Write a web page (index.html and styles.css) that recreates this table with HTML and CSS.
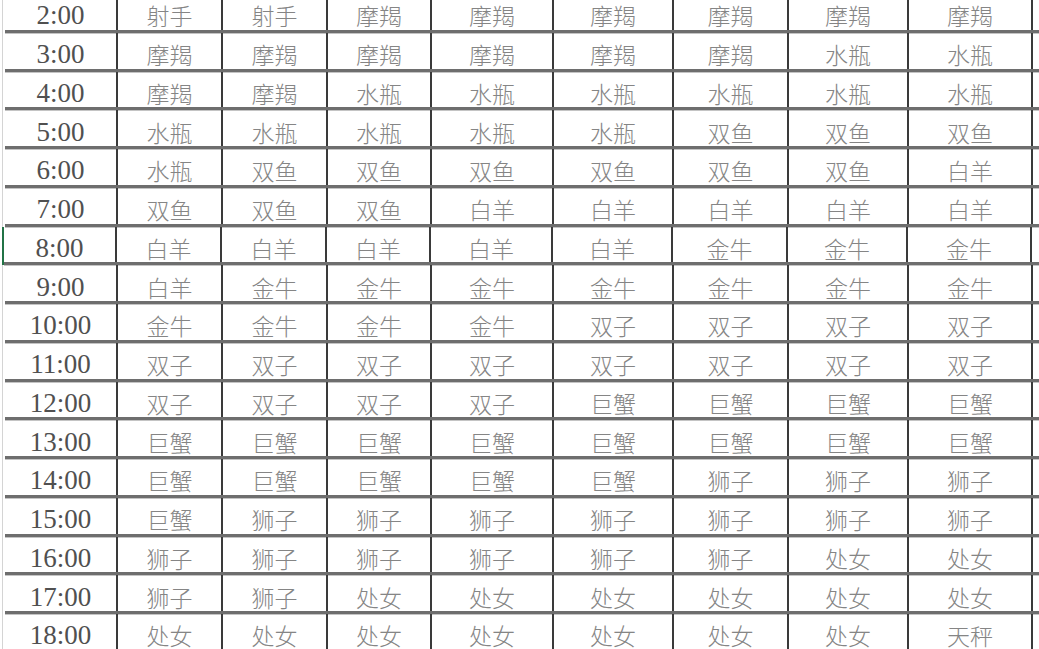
FILE: index.html
```html
<!DOCTYPE html>
<html lang="zh-CN">
<head>
<meta charset="utf-8">
<title>星座时间表</title>
<link rel="stylesheet" href="styles.css">
</head>
<body>
<div class="sheet">
  <div class="row"><div class="gut"></div><div class="cells"><div class="c t">2:00</div><div class="c">射手</div><div class="c">射手</div><div class="c">摩羯</div><div class="c">摩羯</div><div class="c">摩羯</div><div class="c">摩羯</div><div class="c">摩羯</div><div class="c">摩羯</div><div class="f"></div></div></div>
  <div class="row"><div class="gut"></div><div class="cells"><div class="c t">3:00</div><div class="c">摩羯</div><div class="c">摩羯</div><div class="c">摩羯</div><div class="c">摩羯</div><div class="c">摩羯</div><div class="c">摩羯</div><div class="c">水瓶</div><div class="c">水瓶</div><div class="f"></div></div></div>
  <div class="row"><div class="gut"></div><div class="cells"><div class="c t">4:00</div><div class="c">摩羯</div><div class="c">摩羯</div><div class="c">水瓶</div><div class="c">水瓶</div><div class="c">水瓶</div><div class="c">水瓶</div><div class="c">水瓶</div><div class="c">水瓶</div><div class="f"></div></div></div>
  <div class="row"><div class="gut"></div><div class="cells"><div class="c t">5:00</div><div class="c">水瓶</div><div class="c">水瓶</div><div class="c">水瓶</div><div class="c">水瓶</div><div class="c">水瓶</div><div class="c">双鱼</div><div class="c">双鱼</div><div class="c">双鱼</div><div class="f"></div></div></div>
  <div class="row"><div class="gut"></div><div class="cells"><div class="c t">6:00</div><div class="c">水瓶</div><div class="c">双鱼</div><div class="c">双鱼</div><div class="c">双鱼</div><div class="c">双鱼</div><div class="c">双鱼</div><div class="c">双鱼</div><div class="c">白羊</div><div class="f"></div></div></div>
  <div class="row"><div class="gut"></div><div class="cells"><div class="c t">7:00</div><div class="c">双鱼</div><div class="c">双鱼</div><div class="c">双鱼</div><div class="c">白羊</div><div class="c">白羊</div><div class="c">白羊</div><div class="c">白羊</div><div class="c">白羊</div><div class="f"></div></div></div>
  <div class="row"><div class="gut sel"></div><div class="cells"><div class="c t">8:00</div><div class="c">白羊</div><div class="c">白羊</div><div class="c">白羊</div><div class="c">白羊</div><div class="c">白羊</div><div class="c">金牛</div><div class="c">金牛</div><div class="c">金牛</div><div class="f"></div></div></div>
  <div class="row"><div class="gut"></div><div class="cells"><div class="c t">9:00</div><div class="c">白羊</div><div class="c">金牛</div><div class="c">金牛</div><div class="c">金牛</div><div class="c">金牛</div><div class="c">金牛</div><div class="c">金牛</div><div class="c">金牛</div><div class="f"></div></div></div>
  <div class="row"><div class="gut"></div><div class="cells"><div class="c t">10:00</div><div class="c">金牛</div><div class="c">金牛</div><div class="c">金牛</div><div class="c">金牛</div><div class="c">双子</div><div class="c">双子</div><div class="c">双子</div><div class="c">双子</div><div class="f"></div></div></div>
  <div class="row"><div class="gut"></div><div class="cells"><div class="c t">11:00</div><div class="c">双子</div><div class="c">双子</div><div class="c">双子</div><div class="c">双子</div><div class="c">双子</div><div class="c">双子</div><div class="c">双子</div><div class="c">双子</div><div class="f"></div></div></div>
  <div class="row"><div class="gut"></div><div class="cells"><div class="c t">12:00</div><div class="c">双子</div><div class="c">双子</div><div class="c">双子</div><div class="c">双子</div><div class="c">巨蟹</div><div class="c">巨蟹</div><div class="c">巨蟹</div><div class="c">巨蟹</div><div class="f"></div></div></div>
  <div class="row"><div class="gut"></div><div class="cells"><div class="c t">13:00</div><div class="c">巨蟹</div><div class="c">巨蟹</div><div class="c">巨蟹</div><div class="c">巨蟹</div><div class="c">巨蟹</div><div class="c">巨蟹</div><div class="c">巨蟹</div><div class="c">巨蟹</div><div class="f"></div></div></div>
  <div class="row"><div class="gut"></div><div class="cells"><div class="c t">14:00</div><div class="c">巨蟹</div><div class="c">巨蟹</div><div class="c">巨蟹</div><div class="c">巨蟹</div><div class="c">巨蟹</div><div class="c">狮子</div><div class="c">狮子</div><div class="c">狮子</div><div class="f"></div></div></div>
  <div class="row"><div class="gut"></div><div class="cells"><div class="c t">15:00</div><div class="c">巨蟹</div><div class="c">狮子</div><div class="c">狮子</div><div class="c">狮子</div><div class="c">狮子</div><div class="c">狮子</div><div class="c">狮子</div><div class="c">狮子</div><div class="f"></div></div></div>
  <div class="row"><div class="gut"></div><div class="cells"><div class="c t">16:00</div><div class="c">狮子</div><div class="c">狮子</div><div class="c">狮子</div><div class="c">狮子</div><div class="c">狮子</div><div class="c">狮子</div><div class="c">处女</div><div class="c">处女</div><div class="f"></div></div></div>
  <div class="row"><div class="gut"></div><div class="cells"><div class="c t">17:00</div><div class="c">狮子</div><div class="c">狮子</div><div class="c">处女</div><div class="c">处女</div><div class="c">处女</div><div class="c">处女</div><div class="c">处女</div><div class="c">处女</div><div class="f"></div></div></div>
  <div class="row"><div class="gut"></div><div class="cells"><div class="c t">18:00</div><div class="c">处女</div><div class="c">处女</div><div class="c">处女</div><div class="c">处女</div><div class="c">处女</div><div class="c">处女</div><div class="c">处女</div><div class="c">天秤</div><div class="f"></div></div></div>
</div>
</body>
</html>
```

FILE: styles.css
```css
html, body {
  margin: 0;
  padding: 0;
  background: #ffffff;
  overflow: hidden;
  width: 1039px;
  height: 649px;
}

.sheet {
  display: flex;
  flex-direction: column;
  margin-top: -6px;
}

.row {
  display: flex;
  height: 38.75px;
  flex: none;
}

.gut {
  width: 1px;
  margin-left: 2px;
  margin-right: 1px;
  border-left: 1px solid #d4d4d4;
  flex: none;
}

.gut.sel {
  width: 0;
  margin-right: 0;
  border-left: 2px solid #217346;
}

.cells {
  flex: 1;
  display: grid;
  grid-template-columns: 113px 105px 105px 104px 122px 120px 115px 120px 124px 1fr;
  border-bottom: 3px solid #6e6e6e;
  box-shadow: 0 1px 0 #c4c4c4;
  box-sizing: border-box;
}

.c {
  border-right: 2px solid #3a3a3a;
  display: flex;
  align-items: center;
  justify-content: center;
  padding-top: 8px;
  font-family: "Noto Sans CJK SC", "Noto Sans", sans-serif;
  font-size: 23px;
  font-weight: 300;
  color: #858585;
  line-height: 1;
}

.c.t {
  font-family: "Liberation Serif", "Noto Sans CJK SC", serif;
  font-size: 27px;
  font-weight: 400;
  color: #505050;
  letter-spacing: 0;
}

.f {
  border-right: none;
}
```
